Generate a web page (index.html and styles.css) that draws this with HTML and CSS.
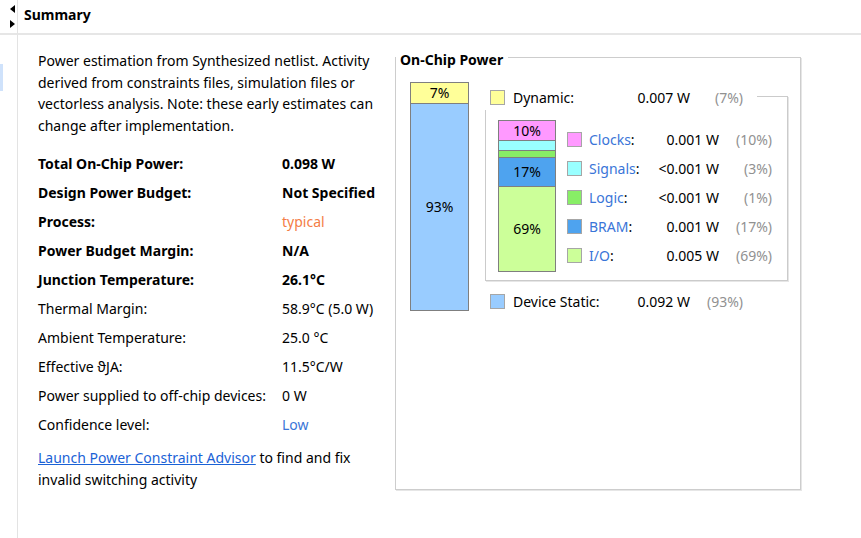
FILE: index.html
```html
<!DOCTYPE html>
<html>
<head>
<meta charset="utf-8">
<link rel="stylesheet" href="styles.css">
</head>
<body>
<div class="app">
  <div class="gutter-top">
    <svg class="arrows" width="17" height="33" viewBox="0 0 17 33">
      <polygon points="15,5 10,9 15,13" fill="#000"/>
      <polygon points="10,20 15,24 10,28" fill="#000"/>
    </svg>
  </div>
  <div class="header"><span class="header-title">Summary</span></div>
  <div class="gutter"><div class="gutter-mark"></div></div>
  <div class="content">
    <div class="left">
      <p class="intro">Power estimation from Synthesized netlist. Activity<br>derived from constraints files, simulation files or<br>vectorless analysis. Note: these early estimates can<br>change after implementation.</p>
      <div class="kv">
        <div class="k b">Total On-Chip Power:</div><div class="v b">0.098 W</div>
        <div class="k b">Design Power Budget:</div><div class="v b">Not Specified</div>
        <div class="k b">Process:</div><div class="v orange">typical</div>
        <div class="k b">Power Budget Margin:</div><div class="v b">N/A</div>
        <div class="k b">Junction Temperature:</div><div class="v b">26.1°C</div>
        <div class="k">Thermal Margin:</div><div class="v">58.9°C (5.0 W)</div>
        <div class="k">Ambient Temperature:</div><div class="v">25.0 °C</div>
        <div class="k">Effective ϑJA:</div><div class="v">11.5°C/W</div>
        <div class="k">Power supplied to off-chip devices:</div><div class="v">0 W</div>
        <div class="k">Confidence level:</div><div class="v blue">Low</div>
      </div>
      <p class="advisor"><a class="link" href="#">Launch Power Constraint Advisor</a> to find and fix<br>invalid switching activity</p>
    </div>
    <div class="box">
      <div class="box-title">On-Chip Power</div>
      <div class="box-body">
        <div class="bigbar">
          <div class="seg sw-dyn big-dyn">7%</div>
          <div class="seg sw-static big-static">93%</div>
        </div>
        <div class="legend">
          <div class="row-top">
            <span class="swatch sw-dyn"></span>
            <span class="lbl">Dynamic:</span>
            <span class="val">0.007 W</span>
            <span class="pct">(7%)</span>
          </div>
          <div class="dyn-box">
            <div class="smallbar">
              <div class="seg sw-clk s-clk">10%</div>
              <div class="seg sw-sig s-sig"></div>
              <div class="seg sw-log s-log"></div>
              <div class="seg sw-bram s-bram">17%</div>
              <div class="seg sw-io s-io">69%</div>
            </div>
            <div class="dyn-rows">
              <div class="drow"><span class="swatch sw-clk"></span><span class="lbl"><span class="blue">Clocks</span>:</span><span class="val">0.001 W</span><span class="pct">(10%)</span></div>
              <div class="drow"><span class="swatch sw-sig"></span><span class="lbl"><span class="blue">Signals</span>:</span><span class="val">&lt;0.001 W</span><span class="pct">(3%)</span></div>
              <div class="drow"><span class="swatch sw-log"></span><span class="lbl"><span class="blue">Logic</span>:</span><span class="val">&lt;0.001 W</span><span class="pct">(1%)</span></div>
              <div class="drow"><span class="swatch sw-bram"></span><span class="lbl"><span class="blue">BRAM</span>:</span><span class="val">0.001 W</span><span class="pct">(17%)</span></div>
              <div class="drow"><span class="swatch sw-io"></span><span class="lbl"><span class="blue">I/O</span>:</span><span class="val">0.005 W</span><span class="pct">(69%)</span></div>
            </div>
          </div>
          <div class="row-static">
            <span class="swatch sw-static"></span>
            <span class="lbl">Device Static:</span>
            <span class="val">0.092 W</span>
            <span class="pct">(93%)</span>
          </div>
        </div>
      </div>
    </div>
  </div>
</div>
</body>
</html>
```
FILE: styles.css
```css
* { box-sizing: border-box; }
html, body { margin: 0; padding: 0; background: #fff; }
body {
  font-family: "Noto Sans", "Open Sans", sans-serif;
  font-size: 14px;
  color: #000;
  width: 861px;
  height: 538px;
  overflow: hidden;
}
.app {
  display: grid;
  grid-template-columns: 18px 1fr;
  grid-template-rows: 35px 503px;
}
.gutter-top {
  border-right: 1px solid #e3e3e3;
  border-bottom: 2px solid #e6e6e6;
}
.arrows { display: block; }
.header {
  border-bottom: 2px solid #e6e6e6;
  padding-left: 6px;
  display: flex;
  align-items: center;
  height: 35px;
  padding-bottom: 5px;
}
.header-title { font-weight: bold; font-size: 14px; }
.gutter {
  border-right: 1px solid #e3e3e3;
  padding-top: 29px;
}
.gutter-mark {
  width: 3px;
  height: 27px;
  background: #cfe2fb;
}
.content {
  display: flex;
  align-items: flex-start;
  padding: 15px 0 0 20px;
}
.left { width: 345px; flex: none; }
.intro { margin: 0; line-height: 21.5px; white-space: nowrap; }
.kv {
  display: grid;
  grid-template-columns: 244px auto;
  grid-auto-rows: 29px;
  align-items: center;
  margin-top: 13px;
  white-space: nowrap;
}
.b { font-weight: bold; }
.orange { color: #f47d45; }
.blue { color: #3a75d8; }
.advisor { margin: 8px 0 0; line-height: 21.5px; white-space: nowrap; }
.link { color: #1a62d6; text-decoration: underline; }

.box {
  flex: none;
  margin-left: 12px;
  margin-top: 7px;
  width: 406px;
  height: 433px;
  border: 1px solid #cdcdcd;
  box-shadow: 1px 1px 0 #e6e6e6;
  padding-left: 14px;
}
.box-title {
  display: block;
  width: fit-content;
  font-weight: bold;
  background: #fff;
  margin-top: -7px;
  margin-left: -14px;
  padding: 0 5px 0 4px;
  line-height: 18px;
  height: 18px;
}
.box-body {
  display: flex;
  align-items: flex-start;
  margin-top: 13px;
}
.bigbar {
  width: 59px;
  height: 229px;
  border: 1px solid #7f7f7f;
  display: flex;
  flex-direction: column;
  flex: none;
}
.seg {
  display: flex;
  align-items: center;
  justify-content: center;
  flex: none;
  line-height: 1;
}
.seg + .seg { border-top: 1px solid #7f7f7f; }
.big-dyn { height: 20px; }
.big-static { height: 207px; }

.sw-dyn { background: #ffff99; }
.sw-static { background: #99ccff; }
.sw-clk { background: #ff99ff; }
.sw-sig { background: #99ffff; }
.sw-log { background: #88ee66; }
.sw-bram { background: #4ea3ef; }
.sw-io { background: #ccff99; }

.legend { margin-left: 16px; display: flex; flex-direction: column; }
.swatch {
  width: 15px;
  height: 15px;
  border: 1px solid #a6a6a6;
}
.row-top, .row-static {
  display: grid;
  grid-template-columns: 15px 110px 75px 53px;
  align-items: center;
  height: 24px;
  padding-left: 5px;
}
.row-top {
  position: relative;
  z-index: 1;
  width: 272px;
  height: 26px;
  background: #fff;
  margin-top: 2px;
}
.row-static { margin-top: 8px; }
.lbl { padding-left: 8px; white-space: nowrap; }
.val { text-align: right; white-space: nowrap; }
.pct { text-align: right; color: #919191; white-space: nowrap; }

.dyn-box {
  margin-top: -14px;
  width: 303px;
  height: 185px;
  border: 1px solid #cbcbcb;
  box-shadow: 1px 1px 0 #e6e6e6;
  padding: 23px 0 0 12px;
  display: flex;
  align-items: flex-start;
}
.smallbar {
  width: 58px;
  height: 152px;
  border: 1px solid #7f7f7f;
  display: flex;
  flex-direction: column;
  flex: none;
}
.s-clk { height: 19px; }
.s-sig { height: 10px; }
.s-log { height: 7px; }
.s-bram { height: 29px; }
.s-io { height: 85px; }
.dyn-rows { margin-left: 11px; padding-top: 5px; }
.drow {
  display: grid;
  grid-template-columns: 15px 72px 65px 53px;
  align-items: center;
  height: 29px;
}
.drow .lbl { padding-left: 7px; }
```
